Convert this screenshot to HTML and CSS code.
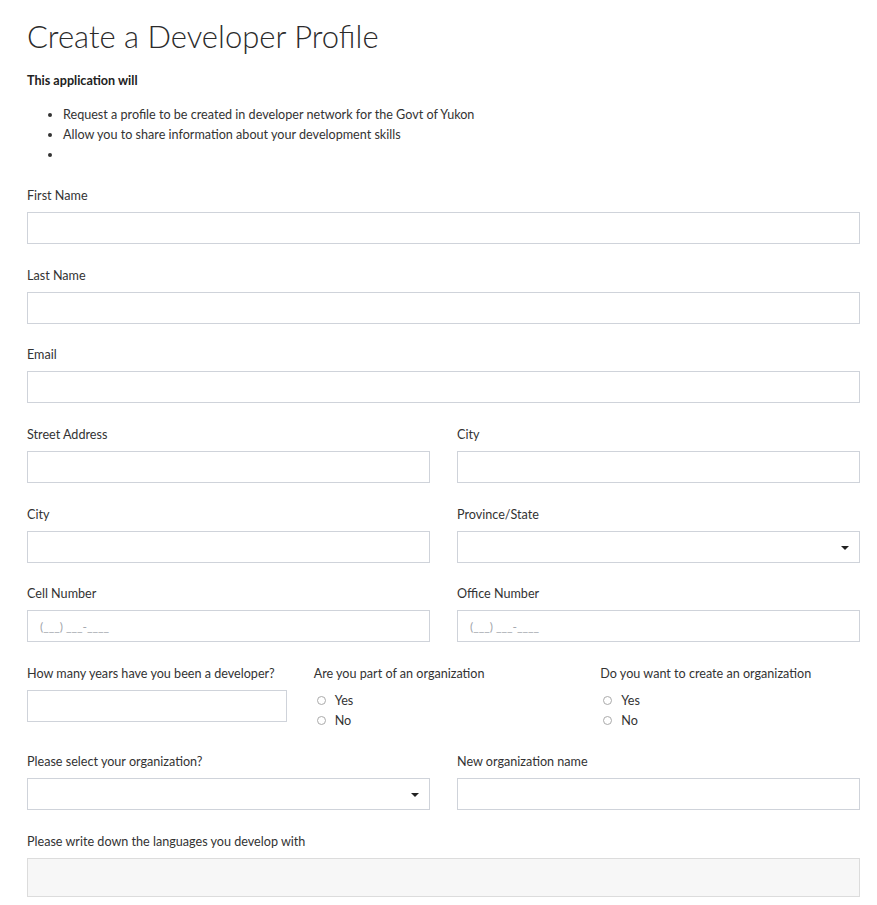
FILE: index.html
```html
<!DOCTYPE html>
<html>
<head>
<meta charset="utf-8">
<link rel="stylesheet" href="styles.css">
</head>
<body>
<main class="page">
  <h1 class="title">Create a Developer Profile</h1>
  <p class="intro">This application will</p>
  <ul class="bullets">
    <li>Request a profile to be created in developer network for the Govt of Yukon</li>
    <li>Allow you to share information about your development skills</li>
    <li></li>
  </ul>

  <form class="form">
    <div class="row one">
      <div class="field"><label>First Name</label><div class="input"></div></div>
    </div>
    <div class="row one">
      <div class="field"><label>Last Name</label><div class="input"></div></div>
    </div>
    <div class="row one">
      <div class="field"><label>Email</label><div class="input"></div></div>
    </div>
    <div class="row two">
      <div class="field"><label>Street Address</label><div class="input"></div></div>
      <div class="field"><label>City</label><div class="input"></div></div>
    </div>
    <div class="row two">
      <div class="field"><label>City</label><div class="input"></div></div>
      <div class="field"><label>Province/State</label><div class="input select"><span class="caret"></span></div></div>
    </div>
    <div class="row two">
      <div class="field"><label>Cell Number</label><div class="input"><span class="mask">(___) ___-____</span></div></div>
      <div class="field"><label>Office Number</label><div class="input"><span class="mask">(___) ___-____</span></div></div>
    </div>
    <div class="row three">
      <div class="field"><label>How many years have you been a developer?</label><div class="input"></div></div>
      <div class="field">
        <label>Are you part of an organization</label>
        <div class="radios">
          <div class="radio"><span class="circle"></span>Yes</div>
          <div class="radio"><span class="circle"></span>No</div>
        </div>
      </div>
      <div class="field">
        <label>Do you want to create an organization</label>
        <div class="radios">
          <div class="radio"><span class="circle"></span>Yes</div>
          <div class="radio"><span class="circle"></span>No</div>
        </div>
      </div>
    </div>
    <div class="row two">
      <div class="field"><label>Please select your organization?</label><div class="input select"><span class="caret"></span></div></div>
      <div class="field"><label>New organization name</label><div class="input"></div></div>
    </div>
    <div class="row one">
      <div class="field"><label>Please write down the languages you develop with</label><div class="input textarea"></div></div>
    </div>
  </form>
</main>
</body>
</html>
```

FILE: styles.css
```css
* { box-sizing: border-box; }
html, body { margin: 0; padding: 0; background: #fff; }
body {
  font-family: "Lato", "Liberation Sans", sans-serif;
  color: #333;
  font-size: 12.6px;
}
.page {
  padding: 0 17px 0 27px;
}
.title {
  margin: 0;
  padding-top: 16px;
  font-weight: 300;
  font-size: 31px;
  line-height: 40px;
  color: #2b2b2b;
}
.intro {
  margin: 15px 0 0;
  font-weight: 700;
  font-size: 12.6px;
  line-height: 20px;
  color: #222;
}
.bullets {
  margin: 14px 0 0;
  padding-left: 36px;
  font-size: 12.6px;
  line-height: 20px;
}
.bullets li { min-height: 20px; }
.form {
  margin-top: 21px;
  display: flex;
  flex-direction: column;
  gap: 21.7px;
}
.row {
  display: grid;
  column-gap: 27px;
}
.row.one { grid-template-columns: 1fr; }
.row.two { grid-template-columns: 1fr 1fr; }
.row.three { grid-template-columns: 1fr 1fr 1fr; }
.field label {
  display: block;
  font-size: 12.6px;
  line-height: 18px;
  padding-top: 1px;
  margin-bottom: 7px;
  color: #333;
}
.input {
  height: 32px;
  border: 1px solid #cfd3da;
  background: #fff;
  position: relative;
  display: flex;
  align-items: center;
  padding-left: 12px;
}
.mask {
  font-size: 12px;
  color: #a0a4aa;
}
.caret {
  position: absolute;
  right: 10px;
  top: 14px;
  width: 0;
  height: 0;
  border-left: 4px solid transparent;
  border-right: 4px solid transparent;
  border-top: 4px solid #222;
}
.textarea {
  height: 39px;
  background: #f7f7f7;
  border-color: #dcdcdc;
}
.radios {
  display: flex;
  flex-direction: column;
  margin-top: 0;
}
.radio {
  display: flex;
  align-items: center;
  height: 20px;
  font-size: 12.6px;
  padding-left: 3px;
}
.circle {
  width: 9px;
  height: 9px;
  border: 1px solid #aaa;
  border-radius: 50%;
  margin-right: 9px;
}
```
